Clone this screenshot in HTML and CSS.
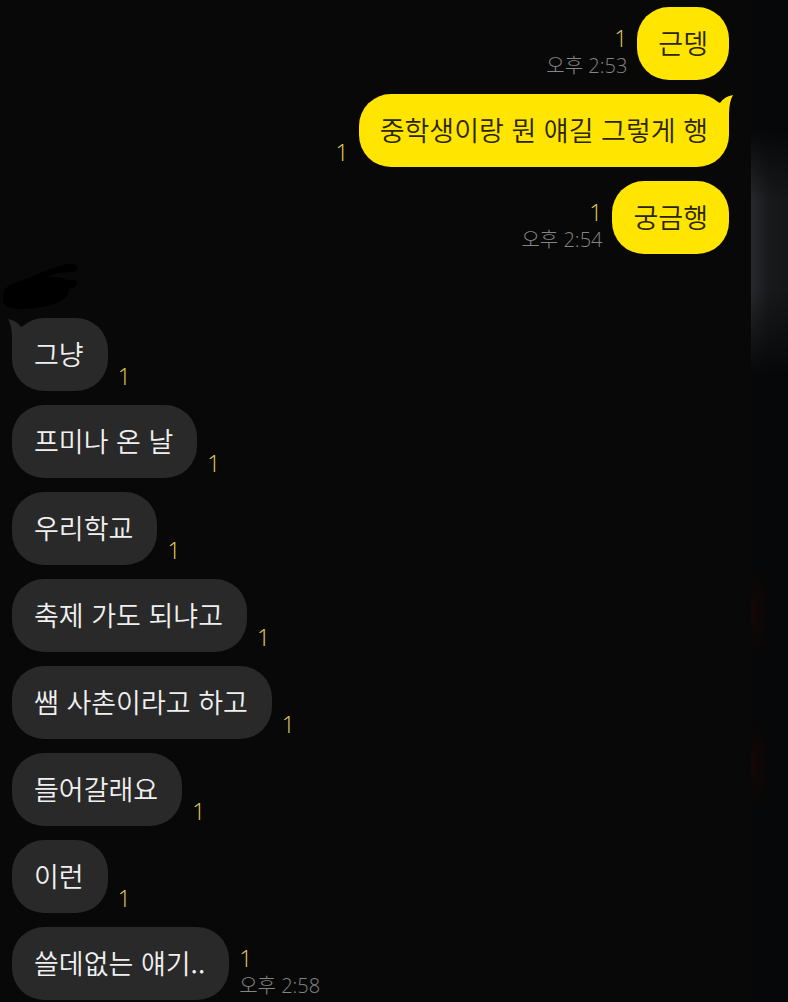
FILE: index.html
```html
<!doctype html>
<html lang="ko">
    <head>
        <meta charset="utf-8">
        <meta name="viewport" content="width=device-width, initial-scale=1">
        <title>채팅</title>
        <link rel="stylesheet" href="styles.css">
    </head>

    <body>
        <main class="chat">
            <section class="group sent">
                <div class="message">
                    <p class="bubble">근뎅</p>
                    <div class="meta">
                        <span class="unread">1</span>
                        <time>오후 2:53</time>
                    </div>
                </div>
                <div class="message">
                    <p class="bubble">중학생이랑 뭔 얘길 그렇게 행
                        <svg class="tail" width="22" height="34" viewBox="0 0 22 34"><path d="M6 8 L9 9 Q14 2 22 1 Q18 8 18 20 V33 H6 Z"/></svg>
                    </p>
                    <div class="meta"><span class="unread">1</span></div>
                </div>
                <div class="message">
                    <p class="bubble">궁금행</p>
                    <div class="meta">
                        <span class="unread">1</span>
                        <time>오후 2:54</time>
                    </div>
                </div>
            </section>

            <section class="group received">
                <!-- sender name, scribbled out -->
                <svg class="sender" width="78" height="50" viewBox="0 0 78 50">
                    <path d="M3 35 C3 27 7 24 14 21 C30 16 48 7 59 4 C65 2 73 1 76 3 C79 6 77 10 73 10 C63 10 55 11 48 15 C58 15 64 15 67 19 C71 17 77 17 77 21 C77 25 73 26 69 27 C69 35 62 38 56 41 C47 45 33 47 20 47 C9 47 2 44 3 35 Z"/>
                </svg>
                <div class="message">
                    <p class="bubble">그냥
                        <svg class="tail" width="22" height="34" viewBox="0 0 22 34"><path d="M16 8 L13 9 Q8 2 0 1 Q4 8 4 20 V33 H16 Z"/></svg>
                    </p>
                    <div class="meta"><span class="unread">1</span></div>
                </div>
                <div class="message">
                    <p class="bubble">프미나 온 날</p>
                    <div class="meta"><span class="unread">1</span></div>
                </div>
                <div class="message">
                    <p class="bubble">우리학교</p>
                    <div class="meta"><span class="unread">1</span></div>
                </div>
                <div class="message">
                    <p class="bubble">축제 가도 되냐고</p>
                    <div class="meta"><span class="unread">1</span></div>
                </div>
                <div class="message">
                    <p class="bubble">쌤 사촌이라고 하고</p>
                    <div class="meta"><span class="unread">1</span></div>
                </div>
                <div class="message">
                    <p class="bubble">들어갈래요</p>
                    <div class="meta"><span class="unread">1</span></div>
                </div>
                <div class="message">
                    <p class="bubble">이런</p>
                    <div class="meta"><span class="unread">1</span></div>
                </div>
                <div class="message">
                    <p class="bubble">쓸데없는 얘기..</p>
                    <div class="meta">
                        <span class="unread">1</span>
                        <time>오후 2:58</time>
                    </div>
                </div>
            </section>
        </main>
        <div class="edge"></div>
    </body>
</html>
```

FILE: styles.css
```css
* {
    box-sizing: border-box;
}

body {
    display: flex;
    min-height: 100vh;
    margin: 0;
    background-color: #080808;
    font-family: 'Noto Sans CJK KR', sans-serif;
    font-weight: 300;
}

.chat {
    flex: 1;
    min-width: 0;
    padding: 7px 22px 0 12px;
}

/* blurred strip along the right side */
.edge {
    width: 37px;
    background:
        linear-gradient(#050708 130px, transparent 200px, transparent 290px, #050708 375px) 0 0 / 100% 400px no-repeat,
        linear-gradient(to right, #27282b, #18191b 18px, #151617) 0 0 / 100% 400px no-repeat,
        radial-gradient(ellipse 22px 50px at 0 612px, #150706, transparent),
        radial-gradient(ellipse 22px 50px at 0 764px, #150706, transparent),
        #050708;
}

.group {
    display: flex;
    flex-direction: column;
    gap: 14px;
}

.message {
    display: flex;
    align-items: flex-end;
    gap: 10px;
}

.sent .message {
    flex-direction: row-reverse;
}

.bubble {
    position: relative;
    margin: 0;
    border-radius: 32px;
    font-size: 27px;
    font-weight: 350;
    line-height: 40px;
}

.sent .bubble {
    padding: 16px 21px 17px;
    background-color: #ffe500;
    color: #2a2500;
}

.received .bubble {
    padding: 16px 24px 17px 22px;
    background-color: #292929;
    color: #f0f0f0;
}

.tail {
    position: absolute;
    top: 0;
}

.sent .tail {
    right: -4px;
    fill: #ffe500;
}

.received .tail {
    left: -4px;
    fill: #292929;
}

.meta {
    display: flex;
    flex-direction: column;
    flex-shrink: 0;
    color: #858585;
    font-family: 'Open Sans', 'Noto Sans CJK KR', sans-serif;
    font-size: 20px;
    line-height: 28px;
}

.sent .meta {
    align-items: flex-end;
}

.unread {
    color: #e5d05a;
    font-size: 23px;
}

.unread:last-child {
    margin-bottom: 1px;
}

.sender {
    display: block;
    margin: 8px 0 -8px -12px;
    fill: #000;
}
```
